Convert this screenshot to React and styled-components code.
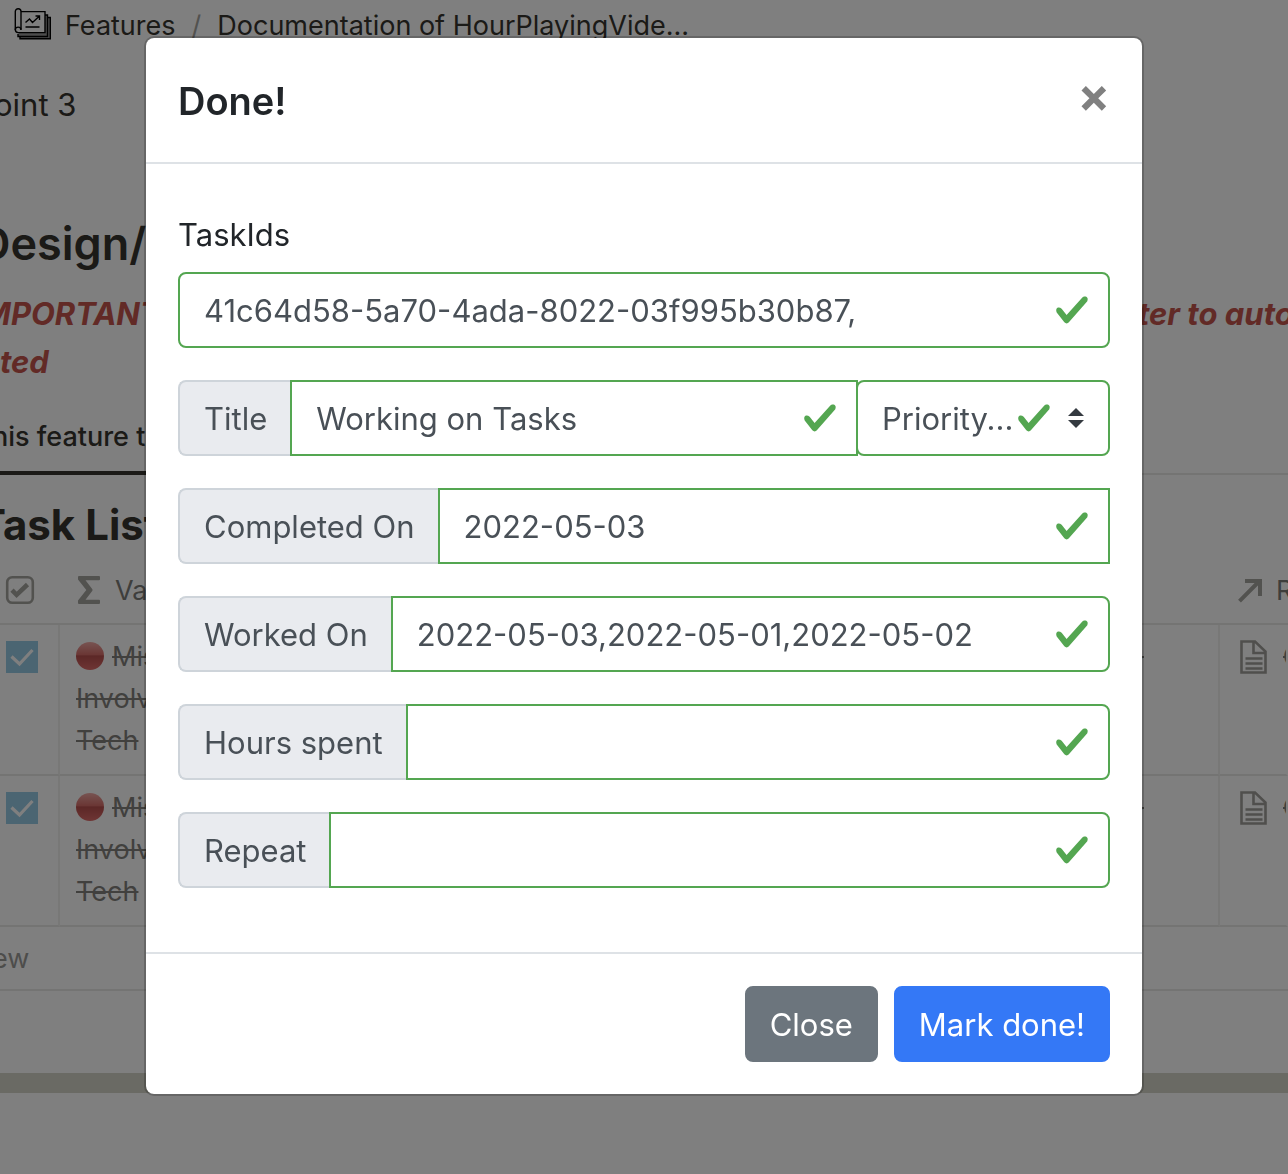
import React from "react";
import styled, { createGlobalStyle } from "styled-components";

const GlobalStyle = createGlobalStyle`
  *, *::before, *::after { box-sizing: border-box; }
  body {
    margin: 0;
    background: #ffffff;
    color: #37352f;
    font-family: Inter, "Liberation Sans", sans-serif;
    overflow: hidden;
  }
  button, input, select { font-family: inherit; }
  svg { display: block; flex-shrink: 0; }
`;

/* ---------- document behind the dialog ---------- */

const Page = styled.main`
  min-height: 100vh;
  overflow: hidden;
  white-space: nowrap;
`;

const Breadcrumb = styled.nav`
  display: flex;
  align-items: center;
  height: 50px;
  padding-left: 14px;
  font-size: 27px;
`;

const CrumbLink = styled.a`
  display: flex;
  align-items: center;
  gap: 14px;
  color: inherit;
  text-decoration: none;
`;

const Slash = styled.span`
  padding: 0 16px;
  color: #a5a49f;
`;

const Paragraph = styled.p`
  margin: 31px 0 0 -6px;
  font-size: 31px;
  line-height: 48px;
`;

const Heading = styled.h2`
  margin: 85px 0 0 -22px;
  font-size: 45px;
  line-height: 60px;
  font-weight: 600;
`;

const Warning = styled.div`
  margin: 16px 0 0 -18px;
  color: #c4554d;
  font-size: 31px;
  line-height: 48px;
  font-weight: 700;
  font-style: italic;
`;

const WarningLine = styled.div`
  display: flex;
  justify-content: space-between;
  padding-left: ${(p) => (p.$indent ? "18px" : "0")};
`;

const WarningEnd = styled.span`
  flex: 0 0 150px;
  min-width: 0;
`;

const TabBar = styled.div`
  display: flex;
  margin-top: 19px;
  border-bottom: 2px solid #e9e9e7;
`;

const Tab = styled.a`
  margin: 0 0 -2px -8px;
  padding: 8px 0 10px;
  width: 300px;
  border-bottom: 4px solid #37352f;
  color: inherit;
  font-size: 27px;
  line-height: 48px;
  font-weight: 500;
  text-decoration: none;
`;

const ListTitle = styled.h3`
  margin: 20px 0 0 -22px;
  font-size: 42px;
  line-height: 60px;
  font-weight: 700;
`;

const Table = styled.table`
  width: 100%;
  table-layout: fixed;
  border-collapse: separate;
  border-spacing: 0;
  font-size: 27px;
`;

const Col = styled.col`
  width: ${(p) => p.$width};
`;

const HeadCell = styled.th`
  height: 70px;
  padding: 2px 0 0 ${(p) => (p.$first ? "5px" : "17px")};
  border-bottom: 2px solid #e9e9e7;
  color: #7d7c78;
  font-weight: 400;
  text-align: left;
  overflow: hidden;
`;

const HeadLabel = styled.span`
  display: flex;
  align-items: center;
  gap: 14px;
`;

const Cell = styled.td`
  height: 151px;
  padding: 11px ${(p) => (p.$end ? "74px" : "0")} 0 ${(p) => (p.$first ? "6px" : "16px")};
  border-bottom: 2px solid #e9e9e7;
  border-right: 2px solid ${(p) => (p.$divider ? "#f1f1ef" : "transparent")};
  color: #83817c;
  line-height: 42px;
  vertical-align: top;
  text-align: ${(p) => (p.$end ? "right" : "left")};
  overflow: hidden;
`;

const Struck = styled.span`
  font-weight: ${(p) => (p.$strong ? 600 : 400)};
  text-decoration: line-through;
  text-decoration-thickness: 2px;
`;

const DocLink = styled.a`
  display: flex;
  align-items: center;
  gap: 16px;
  margin-left: 4px;
  color: #83817c;
  text-decoration: none;
`;

const Dot = styled.span`
  display: inline-block;
  width: 28px;
  height: 28px;
  margin-right: 8px;
  border-radius: 50%;
  vertical-align: -4px;
  background: linear-gradient(#f0a8a4 0%, #d66e6a 45%, #b8504e 50%, #de6b69 100%);
`;

const RowCheck = styled.label`
  position: relative;
  display: flex;
  width: 32px;
  height: 32px;
  margin-top: 5px;

  input {
    appearance: none;
    width: 32px;
    height: 32px;
    margin: 0;
    background: #96cae4;
  }

  svg {
    position: absolute;
    inset: 0;
  }
`;

const NewRow = styled.button`
  display: block;
  width: 100%;
  height: 64px;
  padding: 0;
  border: 0;
  border-bottom: 2px solid #e9e9e7;
  background: none;
  color: #9b9a97;
  font-size: 27px;
  text-align: left;
  text-indent: -8px;
`;

const Strip = styled.div`
  height: 20px;
  margin-top: 82px;
  background: #d4d4c8;
`;

/* ---------- dialog ---------- */

const Backdrop = styled.div`
  position: fixed;
  inset: 0;
  padding: 36px 16px;
  background: rgba(0, 0, 0, 0.5);
  overflow: auto;
`;

const Dialog = styled.section`
  max-width: 1000px;
  margin: 0 auto;
  border: 2px solid rgba(0, 0, 0, 0.2);
  border-radius: 10px;
  background: #ffffff;
  background-clip: padding-box;
  color: #212529;
  font-size: 31px;
`;

const Header = styled.header`
  display: flex;
  align-items: flex-start;
  justify-content: space-between;
  padding: 33px 32px 31px;
  border-bottom: 2px solid #dee2e6;
`;

const Title = styled.h1`
  margin: 0;
  font-size: 38px;
  line-height: 60px;
  font-weight: 600;
`;

const CloseX = styled.button`
  margin: -32px;
  padding: 32px;
  border: 0;
  background: none;
  color: #808080;
  font-size: 48px;
  line-height: 48px;
  font-weight: 700;
`;

const Body = styled.div`
  display: flex;
  flex-direction: column;
  gap: 32px;
  padding: 48px 32px 64px;
`;

const FieldLabel = styled.label`
  display: block;
  margin-bottom: 14px;
  line-height: 46px;
`;

const Group = styled.div`
  display: flex;
`;

const Prepend = styled.label`
  height: 76px;
  padding: 13px 23px 9px 24px;
  border: 2px solid #ced4da;
  border-right: 0;
  border-radius: 8px 0 0 8px;
  background: #e9ebef;
  color: #495057;
  line-height: 48px;
  white-space: nowrap;
`;

const Control = styled.div`
  position: relative;
  display: flex;
  flex: ${(p) => p.$basis || "1 1 0"};
  min-width: 0;
  margin-left: ${(p) => (p.$joined ? "-2px" : "0")};
`;

const radii = { all: "8px", right: "0 8px 8px 0", none: "0" };

const Input = styled.input`
  width: 100%;
  height: 76px;
  padding: 12px 72px 12px 24px;
  border: 2px solid #54a651;
  border-radius: ${(p) => radii[p.$round]};
  background: #ffffff;
  color: #495057;
  font-size: 31px;
  outline: 0;
`;

const Select = styled.select`
  appearance: none;
  width: 100%;
  height: 76px;
  padding: 12px 92px 12px 24px;
  border: 2px solid #54a651;
  border-radius: 8px;
  background: #ffffff;
  color: #495057;
  font-size: 31px;
  outline: 0;
`;

const Mark = styled.span`
  position: absolute;
  top: 0;
  bottom: 0;
  right: ${(p) => p.$right}px;
  display: flex;
  align-items: center;
  pointer-events: none;
`;

const Footer = styled.footer`
  display: flex;
  justify-content: flex-end;
  gap: 16px;
  padding: 32px;
  border-top: 2px solid #dee2e6;
`;

const Button = styled.button`
  height: 76px;
  padding: 13px 23px 11px;
  border: 2px solid ${(p) => (p.$primary ? "#3478f6" : "#6c757d")};
  border-radius: 8px;
  background: ${(p) => (p.$primary ? "#3478f6" : "#6c757d")};
  color: #ffffff;
  font-size: 31px;
  line-height: 48px;
`;

/* ---------- drawings ---------- */

const ChartIcon = () => (
  <svg width="37" height="34" viewBox="0 0 37 34" fill="none" stroke="#000" strokeWidth="1.400">
    <path d="M6 28v2.800h30.300V9.500H33" fill="#999" />
    <path d="M4 26v2.500h29.500V7H30.500" fill="#999" />
    <path d="M7 3.600h24V24.600H4.200a3 3 0 0 1-2.900-3V3.600a2.850 2.850 0 0 1 5.700 0v18" fill="#fff" />
    <path d="M7 22a2.800 2.800 0 0 0-5.700 0" />
    <path d="M11.500 14.500l4-3.500 3 3.500 6.500-6M21.500 8h4v4M11.500 19h14" />
  </svg>
);

const HeadCheckIcon = () => (
  <svg width="30" height="30" viewBox="0 0 30 30" fill="none" stroke="#a5a49f">
    <rect x="2.200" y="2.200" width="25.600" height="25.600" rx="5" strokeWidth="2.600" />
    <path d="M7 15.200l4.600 4.600L22.500 9.500" strokeWidth="4.600" />
  </svg>
);

const SigmaIcon = () => (
  <svg width="24" height="30" viewBox="0 0 24 30" fill="#a5a49f">
    <path d="M2 1h20a1 1 0 0 1 1 1v2.200a1 1 0 0 1-1 1H8.500L15.200 14a1.600 1.600 0 0 1 0 2L8.500 24.800H22a1 1 0 0 1 1 1V28a1 1 0 0 1-1 1H2a1 1 0 0 1-1-1v-2.500L9.300 15 1 4.500V2a1 1 0 0 1 1-1z" />
  </svg>
);

const ArrowIcon = () => (
  <svg width="25" height="25" viewBox="0 0 25 25" fill="none" stroke="#a5a49f" strokeWidth="4">
    <path d="M2.500 23.200L22.500 3M8 3H23V18" />
  </svg>
);

const DocIcon = () => (
  <svg width="27" height="34" viewBox="0 0 27 34" fill="none" stroke="#a09f9a" strokeWidth="2.600">
    <path d="M1.500 1.500H15L25.500 11.500V32.500H1.500zM13.500 2V13H25M5.500 18.500h17M5.500 23.500h17M5.500 28.500h17" />
  </svg>
);

const TickIcon = () => (
  <svg width="32" height="32" viewBox="0 0 32 32" fill="none" stroke="#fff" strokeWidth="3.200">
    <path d="M5.500 15.500l8 7.500L26.500 9" />
  </svg>
);

const ValidIcon = () => (
  <svg width="36" height="36" viewBox="0 0 8 8" fill="#54a651">
    <path d="M2.300 6.730L.6 4.530c-.4-1.040.46-1.400 1.100-.8l1.100 1.400 3.400-3.800c.6-.63 1.600-.27 1.200.7l-4 4.600c-.43.5-.8.4-1.100.1z" />
  </svg>
);

const CaretIcon = () => (
  <svg width="16" height="20" viewBox="0 0 4 5" fill="#343a40">
    <path d="M2 0L0 2h4zm0 5L0 3h4z" />
  </svg>
);

/* ---------- composition ---------- */

function TextField({ id, label, value, round = "right", children }) {
  return (
    <Group>
      <Prepend htmlFor={id}>{label}</Prepend>
      <Control>
        <Input id={id} defaultValue={value} $round={round} />
        <Mark $right={20}><ValidIcon /></Mark>
      </Control>
      {children}
    </Group>
  );
}

function TaskRow() {
  return (
    <tr>
      <Cell $first $divider>
        <RowCheck>
          <input type="checkbox" defaultChecked aria-label="Task done" />
          <TickIcon />
        </RowCheck>
      </Cell>
      <Cell>
        <Struck><Dot />Mis</Struck><br />
        <Struck>Involv</Struck><br />
        <Struck>Tech</Struck>
      </Cell>
      <Cell $end $divider><Struck>-</Struck></Cell>
      <Cell>
        <DocLink href="#"><DocIcon /><Struck $strong>O</Struck></DocLink>
      </Cell>
    </tr>
  );
}

export default function App() {
  return (
    <>
      <GlobalStyle />
      <Page>
        <Breadcrumb>
          <CrumbLink href="#"><ChartIcon />Features</CrumbLink>
          <Slash>/</Slash>
          <CrumbLink href="#">Documentation of HourPlayingVide...</CrumbLink>
        </Breadcrumb>
        <Paragraph>oint 3</Paragraph>
        <Heading>Design/A</Heading>
        <Warning>
          <WarningLine><span>MPORTANT</span><WarningEnd>ter to auto</WarningEnd></WarningLine>
          <WarningLine $indent>ted</WarningLine>
        </Warning>
        <TabBar><Tab href="#">his feature t</Tab></TabBar>
        <ListTitle>Task List</ListTitle>
        <Table>
          <colgroup>
            <Col $width="60px" /><Col $width="auto" /><Col $width="300px" /><Col $width="68px" />
          </colgroup>
          <thead>
            <tr>
              <HeadCell $first><HeadCheckIcon /></HeadCell>
              <HeadCell><HeadLabel><SigmaIcon />Va</HeadLabel></HeadCell>
              <HeadCell />
              <HeadCell><HeadLabel><ArrowIcon />R</HeadLabel></HeadCell>
            </tr>
          </thead>
          <tbody>
            <TaskRow />
            <TaskRow />
          </tbody>
        </Table>
        <NewRow type="button">ew</NewRow>
        <Strip />
      </Page>

      <Backdrop>
        <Dialog role="dialog" aria-modal="true" aria-labelledby="dialog-title">
          <Header>
            <Title id="dialog-title">Done!</Title>
            <CloseX type="button" aria-label="Close dialog">×</CloseX>
          </Header>
          <Body>
            <div>
              <FieldLabel htmlFor="task-ids">TaskIds</FieldLabel>
              <Control>
                <Input id="task-ids" defaultValue="41c64d58-5a70-4ada-8022-03f995b30b87," $round="all" />
                <Mark $right={20}><ValidIcon /></Mark>
              </Control>
            </div>
            <TextField id="title" label="Title" value="Working on Tasks" round="none">
              <Control $basis="0 0 254px" $joined>
                <Select aria-label="Priority" defaultValue="">
                  <option value="">Priority...</option>
                </Select>
                <Mark $right={58}><ValidIcon /></Mark>
                <Mark $right={26}><CaretIcon /></Mark>
              </Control>
            </TextField>
            <TextField id="completed-on" label="Completed On" value="2022-05-03" round="none" />
            <TextField id="worked-on" label="Worked On" value="2022-05-03,2022-05-01,2022-05-02" />
            <TextField id="hours-spent" label="Hours spent" value="" />
            <TextField id="repeat" label="Repeat" value="" />
          </Body>
          <Footer>
            <Button type="button">Close</Button>
            <Button type="button" $primary>Mark done!</Button>
          </Footer>
        </Dialog>
      </Backdrop>
    </>
  );
}
